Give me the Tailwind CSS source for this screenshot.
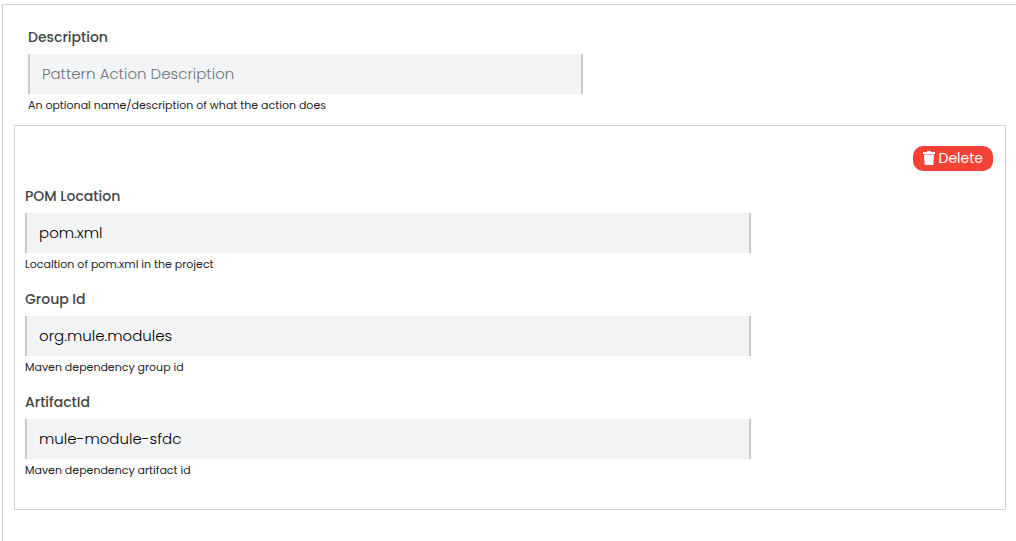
<!DOCTYPE html>
<html lang="en">
<head>
    <meta charset="UTF-8">
    <meta name="viewport" content="width=device-width, initial-scale=1.0">
    <title>Pattern Action</title>
    <script src="https://cdn.jsdelivr.net/npm/@tailwindcss/browser@4"></script>
</head>
<body class="bg-white font-[Poppins,Inter,sans-serif] text-[#212529]">
    <main class="mt-1 ml-0.5 min-h-[calc(100vh-4px)] border-t border-l border-[#d3d3d3] pt-5 pr-2.5 pb-8 pl-[11px]">
        <div class="px-3.5">
            <label for="description" class="block h-[29px] text-sm leading-6 font-medium text-[#444444]">Description</label>
            <input id="description" type="text" placeholder="Pattern Action Description" aria-describedby="description-help" class="block h-10 w-full max-w-[555px] border-x-2 border-[#c8c9cb] bg-[#f3f4f6] px-3 pb-0.5 text-[15px] font-light text-black placeholder:text-[#6c757d]">
            <p id="description-help" class="text-[11px] leading-[22px]">An optional name/description of what the action does</p>
        </div>

        <section class="mt-[9px] border border-[#d3d3d3] pt-5 pr-3 pb-7 pl-2.5">
            <div class="flex justify-end">
                <button type="button" class="flex h-[25px] items-center gap-1 rounded-[10px] bg-[#f44336] px-2.5 pb-0.5 text-sm text-white">
                    <svg class="h-3.5 w-3" viewBox="0 0 12 14" fill="currentColor" aria-hidden="true">
                        <path d="M4 0h4v1h4v2H0V1h4zM1 3.5h10l-.6 9.5c0 .6-.4 1-1 1H2.6c-.6 0-1-.4-1-1z" />
                    </svg>
                    Delete
                </button>
            </div>

            <div class="mt-[13px] w-3/4">
                <label for="pom-location" class="block h-[29px] text-sm leading-6 font-medium text-[#444444]">POM Location</label>
                <input id="pom-location" type="text" value="pom.xml" aria-describedby="pom-help" class="block h-10 w-full border-x-2 border-[#c8c9cb] bg-[#f3f4f6] px-3 pb-0.5 text-[15px] font-light text-black">
                <p id="pom-help" class="text-[11px] leading-[22px]">Localtion of pom.xml in the project</p>
            </div>

            <div class="mt-3 w-3/4">
                <label for="group-id" class="block h-[29px] text-sm leading-6 font-medium text-[#444444]">Group Id</label>
                <input id="group-id" type="text" value="org.mule.modules" aria-describedby="group-help" class="block h-10 w-full border-x-2 border-[#c8c9cb] bg-[#f3f4f6] px-3 pb-0.5 text-[15px] font-light text-black">
                <p id="group-help" class="text-[11px] leading-[22px]">Maven dependency group id</p>
            </div>

            <div class="mt-3 w-3/4">
                <label for="artifact-id" class="block h-[29px] text-sm leading-6 font-medium text-[#444444]">ArtifactId</label>
                <input id="artifact-id" type="text" value="mule-module-sfdc" aria-describedby="artifact-help" class="block h-10 w-full border-x-2 border-[#c8c9cb] bg-[#f3f4f6] px-3 pb-0.5 text-[15px] font-light text-black">
                <p id="artifact-help" class="text-[11px] leading-[22px]">Maven dependency artifact id</p>
            </div>
        </section>
    </main>
</body>
</html>
